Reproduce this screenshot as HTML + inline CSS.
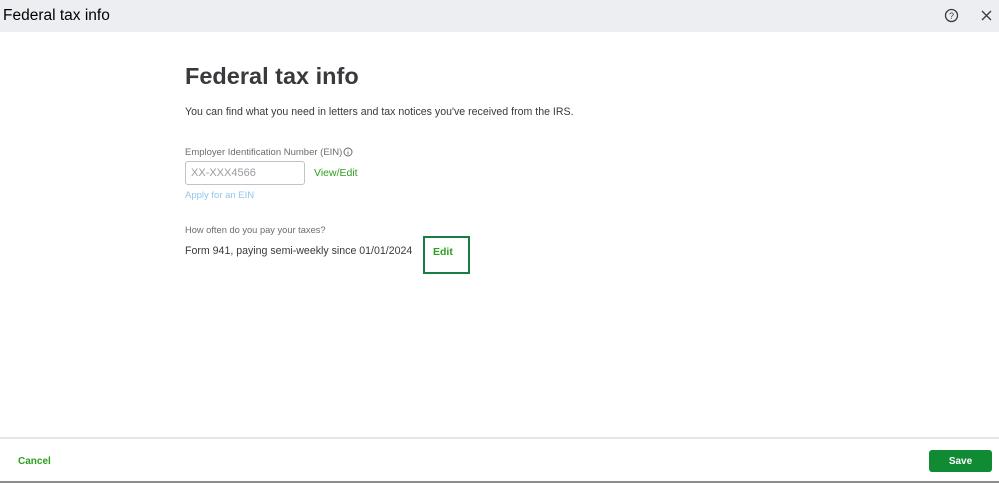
<!DOCTYPE html>
<html><head><style>
body{margin:0;width:999px;height:483px;position:relative;background:#fff;font-family:"Liberation Sans",sans-serif;overflow:hidden;color:#393a3d}
.hdr{position:absolute;left:0;top:0;width:999px;height:32px;background:#eceef1}
.t{position:absolute;font-size:15.5px;color:#000;top:7px;left:3px}
.a{position:absolute;white-space:nowrap}
</style></head><body>
<div class="hdr"><div class="t">Federal tax info</div>
<svg class="a" style="left:944px;top:8px" width="15" height="15" viewBox="0 0 15 15"><circle cx="7.5" cy="7.5" r="6" fill="none" stroke="#393a3d" stroke-width="1.3"/><text x="7.5" y="11" font-size="9" text-anchor="middle" fill="#393a3d" font-family="Liberation Sans">?</text></svg>
<svg class="a" style="left:981px;top:10px" width="11" height="11" viewBox="0 0 11 11"><path d="M1 1L10 10M10 1L1 10" stroke="#393a3d" stroke-width="1.3"/></svg>
</div>
<div class="a" style="left:185px;top:63px;font-size:23.5px;font-weight:bold;color:#393a3d">Federal tax info</div>
<div class="a" style="left:185px;top:106px;font-size:10.6px">You can find what you need in letters and tax notices you've received from the IRS.</div>
<div class="a" style="left:185px;top:147px;font-size:9.5px;color:#6b6c72">Employer Identification Number (EIN)</div>
<svg class="a" style="left:343px;top:147px" width="10" height="10" viewBox="0 0 10 10"><circle cx="5" cy="5" r="4" fill="none" stroke="#6b6c72"/><path d="M5 4.5V7.5M5 2.7V3.3" stroke="#6b6c72"/></svg>
<div class="a" style="left:185px;top:161px;width:118px;height:22px;border:1px solid #c1c3c8;border-radius:3px"></div>
<div class="a" style="left:191px;top:167px;font-size:11px;color:#9a9ba0">XX-XXX4566</div>
<div class="a" style="left:314px;top:167px;font-size:10.5px;color:#2ca01c">View/Edit</div>
<div class="a" style="left:185px;top:190px;font-size:9.5px;color:#8fc7ea">Apply for an EIN</div>
<div class="a" style="left:185px;top:225px;font-size:9.3px;color:#6b6c72">How often do you pay your taxes?</div>
<div class="a" style="left:185px;top:245px;font-size:10.6px">Form 941, paying semi-weekly since 01/01/2024</div>
<div class="a" style="left:423px;top:236px;width:43px;height:34px;border:2px solid #187c45"></div>
<div class="a" style="left:433px;top:246px;font-size:10.5px;font-weight:bold;color:#2ca01c">Edit</div>
<div class="a" style="left:0;top:437px;width:999px;height:2px;background:#e4e5e8"></div>
<div class="a" style="left:18px;top:456px;font-size:10px;font-weight:bold;color:#2ca01c">Cancel</div>
<div class="a" style="left:929px;top:450px;height:22px;background:#108b33;border-radius:3px;color:#fff;font-size:10px;font-weight:bold;line-height:23px;text-align:center;width:63px">Save</div>
<div class="a" style="left:0;top:481px;width:999px;height:2px;background:#8d8d8d"></div>
</body></html>
